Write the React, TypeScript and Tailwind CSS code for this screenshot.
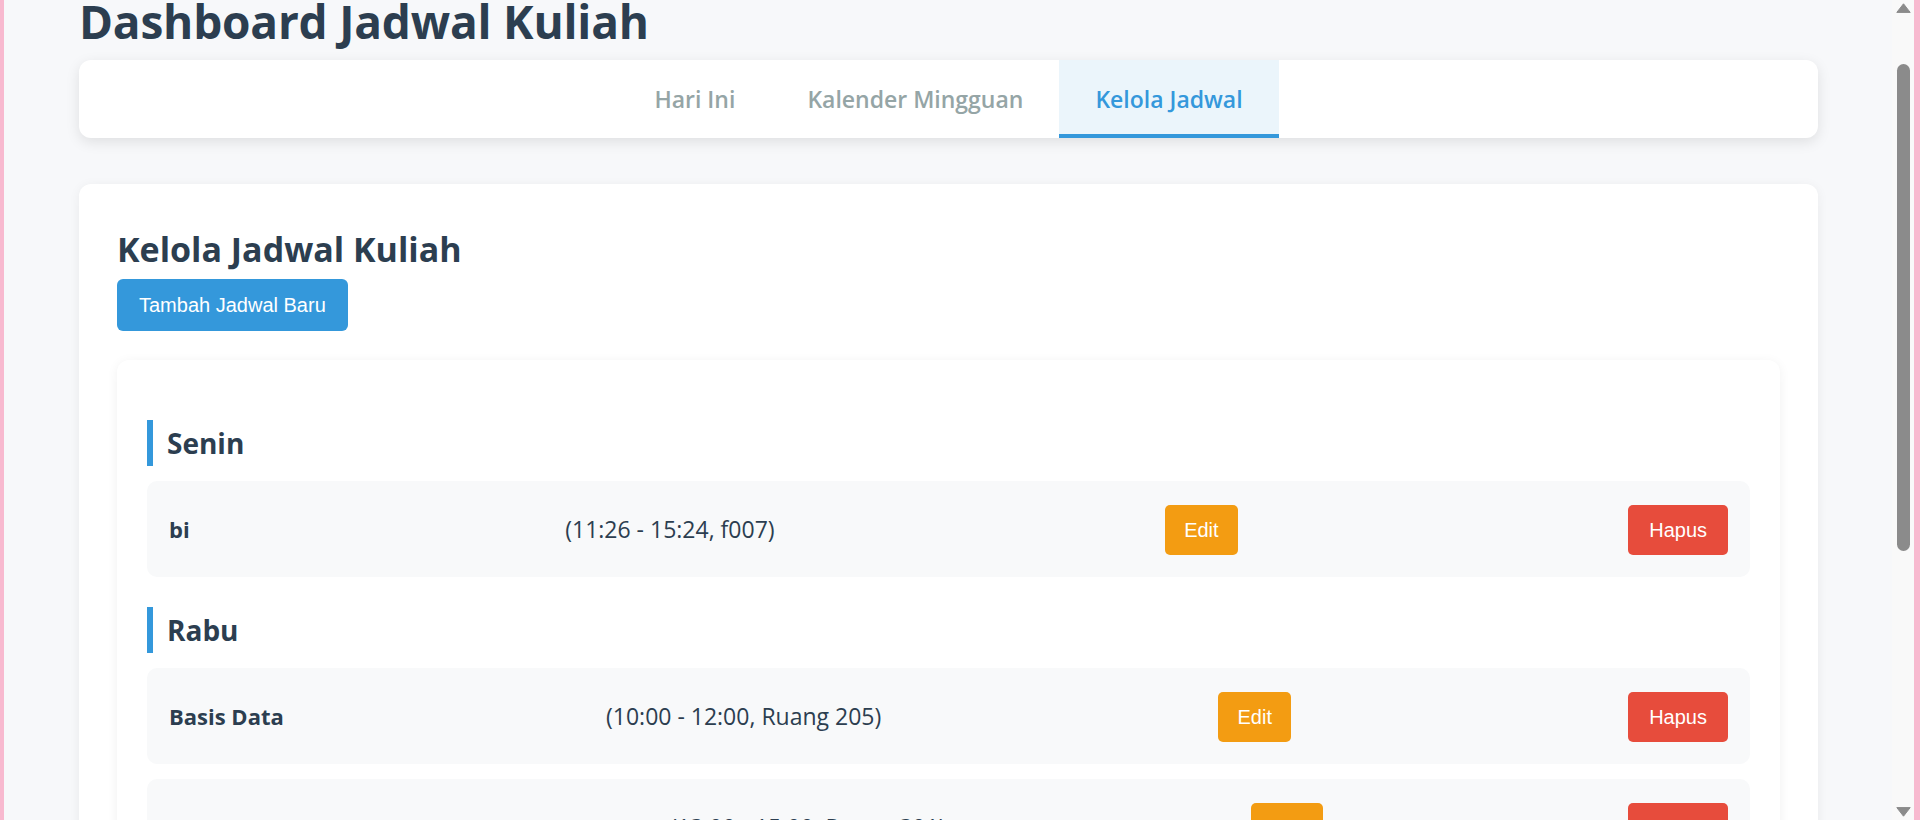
import React from "react";

type Kelas = { nama: string; jam: string; ruang: string };

const jadwal: { hari: string; kelas: Kelas[] }[] = [
  { hari: "Senin", kelas: [{ nama: "bi", jam: "11:26 - 15:24", ruang: "f007" }] },
  {
    hari: "Rabu",
    kelas: [
      { nama: "Basis Data", jam: "10:00 - 12:00", ruang: "Ruang 205" },
      { nama: "Pemrograman Web", jam: "13:00 - 15:00", ruang: "Ruang 301" },
    ],
  },
];

const tabs = ["Hari Ini", "Kalender Mingguan", "Kelola Jadwal"];
const aktif = "Kelola Jadwal";

const Scrollbar = () => (
  <div className="w-[22px] shrink-0 bg-[#f9f9f9] flex flex-col items-center">
    <svg width="15" height="10" viewBox="0 0 15 10" className="mt-[3px]">
      <path d="M7.5 0.8 L14.2 9.4 H0.8 Z" fill="#8b8b8b" stroke="#8b8b8b" strokeLinejoin="round" />
    </svg>
    <div className="mt-[51px] h-[487px] w-[13px] rounded-full bg-[#8b8b8b]" />
    <div className="flex-1" />
    <svg width="15" height="10" viewBox="0 0 15 10" className="mb-[3px]">
      <path d="M0.8 0.6 H14.2 L7.5 9.2 Z" fill="#8b8b8b" stroke="#8b8b8b" strokeLinejoin="round" />
    </svg>
  </div>
);

const BarisKelas = ({ k }: { k: Kelas }) => (
  <div className="flex h-[96px] items-center justify-between rounded-[10px] bg-[#f8f9fa] px-[22px]">
    <span className="text-[22px] font-bold leading-[30px]">{k.nama}</span>
    <span className="text-[23px] leading-[30px]">
      ({k.jam}, {k.ruang})
    </span>
    <button className="ml-[15px] mt-[1px] rounded-[5px] bg-[#f39c12] px-[19px] py-[14px] font-['Liberation_Sans',Arial,sans-serif] text-[20px] leading-[22px] text-white">
      Edit
    </button>
    <button className="ml-[15px] mt-[1px] rounded-[5px] bg-[#e74c3c] px-[21px] py-[14px] font-['Liberation_Sans',Arial,sans-serif] text-[20px] leading-[22px] text-white">
      Hapus
    </button>
  </div>
);

export default function App() {
  return (
    <div className="flex h-[820px] overflow-hidden border-l-[4px] border-r-[6px] border-[#f8b9cf] font-['Open_Sans',sans-serif] text-[#2c3e50]">
      <main className="min-w-0 flex-1 overflow-hidden bg-[#f7f8fa] pl-[75px] pr-[74px]">
        <h1 className="text-[46px] font-bold leading-[43px] tracking-[-0.2px]">Dashboard Jadwal Kuliah</h1>

        <nav className="mt-[17px] flex h-[78px] justify-center rounded-[12px] bg-white shadow-[0_4px_14px_rgba(0,0,0,0.1)]">
          {tabs.map((t) =>
            t === aktif ? (
              <div
                key={t}
                className="flex items-center border-b-4 border-[#3498db] bg-[#ebf5fb] px-[36px] pt-[4px] text-[23px] font-semibold text-[#3498db]"
              >
                {t}
              </div>
            ) : (
              <div key={t} className="flex items-center px-[36px] text-[23px] font-semibold text-[#95a5a6]">
                {t}
              </div>
            )
          )}
        </nav>

        <section className="mt-[46px] rounded-[12px] bg-white px-[38px] pt-[38px] pb-[40px] shadow-[0_2px_12px_rgba(0,0,0,0.06)]">
          <h2 className="text-[34px] font-bold leading-[55px]">Kelola Jadwal Kuliah</h2>
          <button className="mt-[2px] rounded-[6px] bg-[#3498db] px-[22px] py-[14px] font-['Liberation_Sans',Arial,sans-serif] text-[20px] leading-[24px] text-white">
            Tambah Jadwal Baru
          </button>

          <div className="mt-[29px] rounded-[12px] bg-white px-[30px] pt-[60px] pb-[30px] shadow-[0_2px_12px_rgba(0,0,0,0.06)]">
            {jadwal.map((h, i) => (
              <div key={h.hari} className={i > 0 ? "mt-[30px]" : ""}>
                <h3 className="flex h-[46px] items-center border-l-[6px] border-[#3498db] pl-[14px] text-[28px] font-bold leading-[46px]">
                  {h.hari}
                </h3>
                <div className="mt-[15px] flex flex-col gap-[15px]">
                  {h.kelas.map((k) => (
                    <BarisKelas key={k.nama} k={k} />
                  ))}
                </div>
              </div>
            ))}
          </div>
        </section>
      </main>
      <Scrollbar />
    </div>
  );
}
